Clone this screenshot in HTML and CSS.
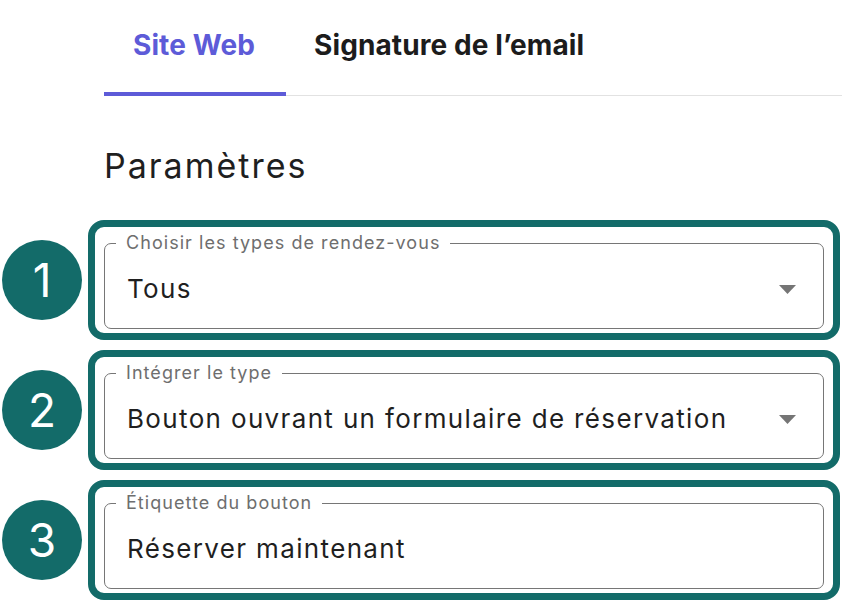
FILE: index.html
```html
<!DOCTYPE html>
<html lang="fr">
<head>
<meta charset="utf-8">
<title>Paramètres</title>
<link rel="stylesheet" href="styles.css">
</head>
<body>
<div class="page">
  <nav class="tabs">
    <div class="tab tab-active">Site Web</div>
    <div class="tab">Signature de l’email</div>
  </nav>
  <h2 class="title">Paramètres</h2>
  <div class="steps">
    <div class="step">
      <div class="num">1</div>
      <div class="frame">
        <fieldset class="field">
          <legend class="label">Choisir les types de rendez-vous</legend>
          <div class="value">
            <span>Tous</span>
            <svg class="arrow" width="17" height="9" viewBox="0 0 17 9"><path d="M0 0H17L8.5 9Z" fill="#757575"/></svg>
          </div>
        </fieldset>
      </div>
    </div>
    <div class="step">
      <div class="num">2</div>
      <div class="frame">
        <fieldset class="field">
          <legend class="label">Intégrer le type</legend>
          <div class="value">
            <span>Bouton ouvrant un formulaire de réservation</span>
            <svg class="arrow" width="17" height="9" viewBox="0 0 17 9"><path d="M0 0H17L8.5 9Z" fill="#757575"/></svg>
          </div>
        </fieldset>
      </div>
    </div>
    <div class="step">
      <div class="num">3</div>
      <div class="frame">
        <fieldset class="field">
          <legend class="label">Étiquette du bouton</legend>
          <div class="value">
            <span>Réserver maintenant</span>
          </div>
        </fieldset>
      </div>
    </div>
  </div>
</div>
</body>
</html>
```

FILE: styles.css
```css
* { box-sizing: border-box; }
html, body { margin: 0; padding: 0; background: #ffffff; }
body {
  font-family: Inter, "Noto Sans", "Liberation Sans", sans-serif;
  font-optical-sizing: none;
  color: #1f1f1f;
}

.page { width: 842px; height: 614px; overflow: hidden; }

.tabs {
  display: flex;
  margin-left: 104px;
  height: 96px;
  border-bottom: 1px solid #e2e2e2;
}
.tab {
  padding: 28px 28px 0 28px;
  font-size: 28px;
  font-weight: 700;
  line-height: 34px;
  letter-spacing: 0.1px;
  color: #1c1c1c;
}
.tab-active {
  color: #5d5bd8;
  padding-left: 29px;
  padding-right: 31px;
  border-bottom: 4px solid #5d5bd8;
  margin-bottom: -1px;
}

.title {
  margin: 50px 0 34px 104px;
  font-size: 34px;
  line-height: 40px;
  font-weight: 400;
  letter-spacing: 2px;
  color: #1f1f1f;
}

.steps {
  display: flex;
  flex-direction: column;
  gap: 10px;
  padding-left: 2px;
}
.step {
  display: flex;
  align-items: center;
  gap: 6px;
}
.num {
  width: 80px;
  height: 80px;
  border-radius: 50%;
  background: #136b69;
  color: #ffffff;
  display: flex;
  align-items: center;
  justify-content: center;
  font-size: 46px;
  line-height: 1;
  flex: none;
}
.frame {
  width: 752px;
  border: 7px solid #136b69;
  border-radius: 16px;
  padding: 5px 9px 4px 9px;
}
.field {
  margin: 0;
  min-width: 0;
  border: 1px solid #767676;
  border-radius: 7px;
  padding: 0 0 0 11px;
}
.label {
  padding: 0 10px;
  font-size: 18px;
  line-height: 22px;
  letter-spacing: 1.05px;
  color: #6e6e6e;
}
.value {
  display: flex;
  align-items: center;
  justify-content: space-between;
  padding: 19px 27px 23px 11px;
  font-size: 26px;
  line-height: 32px;
  letter-spacing: 1.35px;
  color: #1f1f1f;
}
.arrow { display: block; flex: none; }
```
